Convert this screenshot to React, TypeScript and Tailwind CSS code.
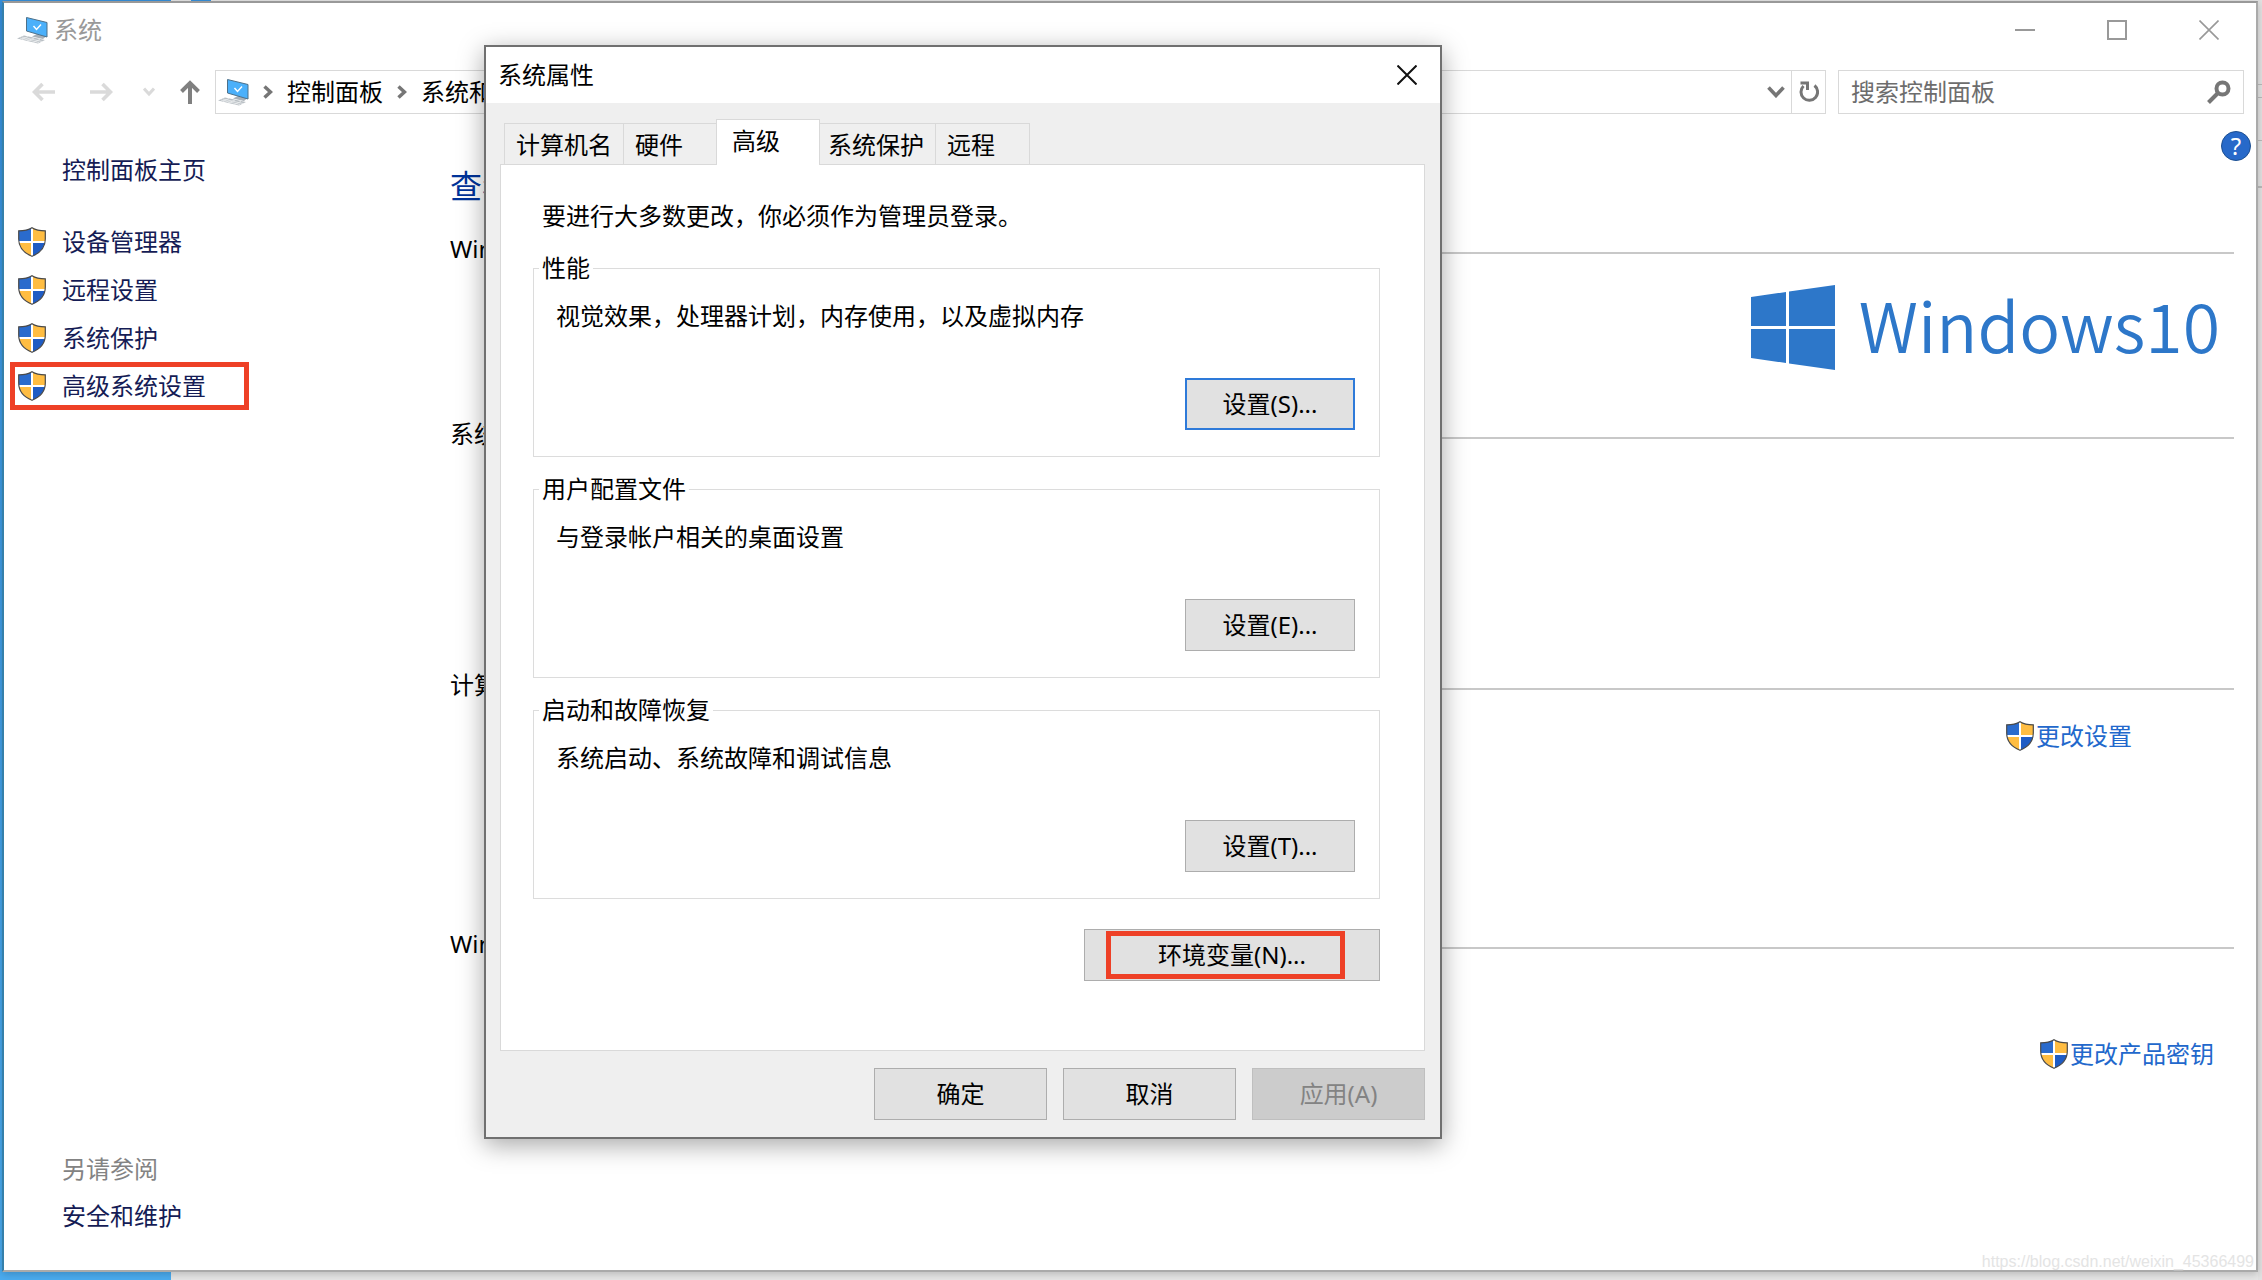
import React from "react";

const font = "font-['Noto_Sans',_'Noto_Sans_CJK_SC',sans-serif]";

function Shield() {
  return (
    <svg viewBox="0 0 28 30" className="h-[30px] w-7 shrink-0" aria-hidden="true">
      <defs>
        <clipPath id="shield-shape">
          <path d="M14 .5C11 2.600 5 3.800.7 3.800V12C.7 20 6 26 14 29.500 22 26 27.300 20 27.300 12V3.800C23 3.800 17 2.600 14 .5Z" />
        </clipPath>
      </defs>
      <g clipPath="url(#shield-shape)">
        <rect width="14" height="15" fill="#2a6bcd" />
        <rect x="14" width="14" height="15" fill="#ffbd42" />
        <rect y="15" width="14" height="15" fill="#ffbd42" />
        <rect x="14" y="15" width="14" height="15" fill="#1f5cc4" />
        <path d="M14 0V30M0 15H28" stroke="#fff" strokeWidth="2" />
      </g>
      <path d="M14 .7C11 2.600 5 3.800.7 3.800V12C.7 20 6 26 14 29.300 22 26 27.300 20 27.300 12V3.800C23 3.800 17 2.600 14 .7Z" fill="none" stroke="#4a4a4a" strokeWidth="1.200" />
    </svg>
  );
}

function ComputerIcon() {
  return (
    <svg viewBox="0 0 31 27" className="h-[27px] w-[31px] shrink-0" aria-hidden="true">
      <path d="M20 17 29 19.500 26 22 15 19.500Z" fill="#a9b1b8" />
      <path d="M9.500.5 30 5.500V20L9.500 14Z" fill="#4bb0fa" stroke="#4d7089" strokeWidth="1" />
      <path d="M16.500 9 19.500 12.500 24 7.500" fill="none" stroke="#fff" strokeWidth="1.400" />
      <path d="M7 18.500 28 23 21 26.500 0 21.500Z" fill="#b9bfc4" />
      <path d="M5 20 25 24.500M3 21 22 25.500M11 19.500 5 22.500M17 21 10 24M23 22.500 16 25.500" stroke="#eceff0" strokeWidth=".8" />
    </svg>
  );
}

function Chevron() {
  return (
    <svg viewBox="0 0 10 14" className="h-3.5 w-2.5 shrink-0" fill="none" stroke="#767676" strokeWidth="3.500" aria-hidden="true">
      <path d="M1.500 1.500 7.500 7 1.500 12.500" />
    </svg>
  );
}

const tasks = ["设备管理器", "远程设置", "系统保护", "高级系统设置"];

function Sidebar() {
  return (
    <nav className="flex w-[446px] shrink-0 flex-col pt-[38px] pb-9 text-[#151c55]" aria-label="任务">
      <a href="#home" className="ml-[58px] leading-9">控制面板主页</a>
      <ul className="mt-[30px] pl-1.5">
        {tasks.map((t, i) => (
          <li key={t}>
            <a
              href="#task"
              className={
                i === 3
                  ? "flex h-12 w-[239px] items-center gap-4 border-[5px] border-[#ee4026] pl-[3px]"
                  : "flex h-12 w-[239px] items-center gap-4 pl-2"
              }
            >
              <Shield />
              {t}
            </a>
          </li>
        ))}
      </ul>
      <p className="mt-auto ml-[58px] leading-9 text-[#838383]">另请参阅</p>
      <a href="#security" className="mt-[11px] ml-[58px] leading-9">安全和维护</a>
    </nav>
  );
}

function SectionTitle({ children }: { children: string }) {
  return (
    <div className="flex items-center gap-4 leading-9">
      <h2>{children}</h2>
      <span className="mt-2 h-0.5 flex-1 bg-[#c8c8c8]" />
    </div>
  );
}

function WindowsLogo() {
  return (
    <div className="flex items-start gap-6 text-[#2d77c9]">
      <svg viewBox="0 0 84 85" className="h-[85px] w-[84px]" fill="currentColor" aria-hidden="true">
        <path d="M0 12 35 7V41H0ZM38 6.500 84 0V41H38ZM0 44H35V78L0 73ZM38 44H84V85L38 78.500Z" />
      </svg>
      <span className="font-['Noto_Sans_CJK_SC',sans-serif] text-[68px] leading-[77px] font-[350]">Windows10</span>
    </div>
  );
}

function Main() {
  return (
    <main className="flex-1 pt-[49px] pr-[22px]">
      <h1 className="text-[32px] leading-[46px] text-[#003399]">查看有关计算机的基本信息</h1>
      <section className="mt-[22px] h-[185px]">
        <SectionTitle>Windows 版本</SectionTitle>
        <div className="mt-[18px] flex justify-end pr-3.5">
          <WindowsLogo />
        </div>
      </section>
      <section className="h-[251px]">
        <SectionTitle>系统</SectionTitle>
      </section>
      <section className="h-[259px]">
        <SectionTitle>计算机名、域和工作组设置</SectionTitle>
        <a href="#change" className="mt-[15px] mr-[102px] flex items-center justify-end gap-0.5 leading-9 text-[#2268cc]">
          <Shield />
          更改设置
        </a>
      </section>
      <section>
        <SectionTitle>Windows 激活</SectionTitle>
        <a href="#key" className="mt-[74px] mr-5 flex items-center justify-end gap-0.5 leading-9 text-[#2268cc]">
          <Shield />
          更改产品密钥
        </a>
      </section>
    </main>
  );
}

function TitleBar() {
  return (
    <header className="flex h-[54px] items-center pr-[37px] pl-[13px] text-[#999]">
      <ComputerIcon />
      <span className="ml-1.5 flex-1">系统</span>
      <div className="flex gap-[72px]">
        <button aria-label="最小化">
          <svg viewBox="0 0 20 20" className="size-5" stroke="currentColor" strokeWidth="2"><path d="M0 10H20" /></svg>
        </button>
        <button aria-label="最大化">
          <svg viewBox="0 0 20 20" className="size-5" stroke="currentColor" strokeWidth="2" fill="none"><path d="M1 1H19V19H1Z" /></svg>
        </button>
        <button aria-label="关闭">
          <svg viewBox="0 0 20 20" className="size-5" stroke="currentColor" strokeWidth="1.600"><path d="M.5.5 19.500 19.500M19.500.5.5 19.500" /></svg>
        </button>
      </div>
    </header>
  );
}

function NavBar() {
  return (
    <div className="mt-[13px] flex h-11 items-center pr-3 pl-7">
      <button aria-label="后退" className="text-[#dadada]">
        <svg viewBox="0 0 23 20" className="h-5 w-[23px]" fill="none" stroke="currentColor" strokeWidth="3.600"><path d="M23 10H3M10.500 2 2.500 10 10.500 18" /></svg>
      </button>
      <button aria-label="前进" className="ml-[35px] text-[#dadada]">
        <svg viewBox="0 0 23 20" className="h-5 w-[23px]" fill="none" stroke="currentColor" strokeWidth="3.600"><path d="M0 10H20M12.500 2 20.500 10 12.500 18" /></svg>
      </button>
      <button aria-label="最近位置" className="ml-[30px] text-[#dadada]">
        <svg viewBox="0 0 12 10" className="h-2.5 w-3" fill="none" stroke="currentColor" strokeWidth="3"><path d="M1 1.500 6 7 11 1.500" /></svg>
      </button>
      <button aria-label="向上" className="ml-[25px] text-[#808080]">
        <svg viewBox="0 0 20 24" className="h-6 w-5" fill="none" stroke="currentColor" strokeWidth="4"><path d="M10 24V4M1.500 11.500 10 3 18.500 11.500" /></svg>
      </button>
      <div className="ml-[15px] flex h-11 flex-1 items-center border border-[#d9d9d9] pl-0.5">
        <ComputerIcon />
        <span className="ml-3.5 flex items-center gap-3.5">
          <Chevron />
          <a href="#panel">控制面板</a>
          <Chevron />
          <a href="#security">系统和安全</a>
        </span>
        <button aria-label="历史" className="mr-1.5 ml-auto text-[#767676]">
          <svg viewBox="0 0 18 12" className="h-3 w-[18px]" fill="none" stroke="currentColor" strokeWidth="3.600"><path d="M1.500 1.500 9 9.500 16.500 1.500" /></svg>
        </button>
        <button aria-label="刷新" className="flex h-full w-[34px] items-center justify-center border-l border-[#d9d9d9] text-[#767676]">
          <svg viewBox="0 0 20 22" className="h-[22px] w-5" fill="none" stroke="currentColor" strokeWidth="3">
            <path d="M15.500 4.500A8.300 8.300 0 1 1 4.500 5M1.500 2H8.500V9" />
          </svg>
        </button>
      </div>
      <label className="ml-3 flex h-11 w-[406px] items-center border border-[#d9d9d9] pr-3 pl-3">
        <input aria-label="搜索控制面板" placeholder="搜索控制面板" className="min-w-0 flex-1 outline-none placeholder:text-[#6d6d6d]" />
        <svg viewBox="0 0 24 24" className="size-6" fill="none" stroke="#767676" strokeWidth="4" aria-hidden="true">
          <circle cx="15.500" cy="8.500" r="6" />
          <path d="M11 13 1.500 22.500" />
        </svg>
      </label>
    </div>
  );
}

const button = "h-[52px] border border-[#adadad] bg-[#e1e1e1]";

function Group({ title, text, label, focused }: { title: string; text: string; label: string; focused?: boolean }) {
  return (
    <fieldset className="mb-3.5 h-[207px] border border-[#dcdcdc] pr-6 pl-[22px]">
      <legend className="-ml-[17px] px-[3px] leading-9">{title}</legend>
      <p className="mt-3 leading-9">{text}</p>
      <div className="mt-11 flex justify-end">
        <button
          className={
            focused
              ? "h-[52px] w-[170px] border-2 border-[#2e7ad9] bg-[#e1e1e1]"
              : "h-[52px] w-[170px] border border-[#adadad] bg-[#e1e1e1]"
          }
        >
          {label}
        </button>
      </div>
    </fieldset>
  );
}

const tabs = [
  { name: "计算机名", cls: "h-[41px] w-[119px] border-t border-l pt-0.5 pl-[11px]" },
  { name: "硬件", cls: "h-[41px] w-[93px] border-t border-l pt-0.5 pl-[11px]" },
  { name: "高级", cls: "relative -mb-px h-[46px] w-[104px] border-x border-t bg-white pb-1 pl-[15px]" },
  { name: "系统保护", cls: "h-[41px] w-[115px] border-t pt-0.5 pl-2" },
  { name: "远程", cls: "h-[41px] w-[95px] border-x border-t pt-0.5 pl-[11px]" },
];

function Dialog() {
  return (
    <div
      role="dialog"
      aria-label="系统属性"
      className="absolute top-[45px] left-[484px] w-[958px] border-2 border-[#707070] bg-[#efefef] shadow-[0_6px_24px_rgba(0,0,0,0.35)]"
    >
      <div className="flex h-14 items-center justify-between bg-white pr-[23px] pl-3">
        <h2>系统属性</h2>
        <button aria-label="关闭">
          <svg viewBox="0 0 20 20" className="size-5" stroke="#111" strokeWidth="2"><path d="M.5.5 19.500 19.500M19.500.5.5 19.500" /></svg>
        </button>
      </div>
      <div className="pt-4 pr-[15px] pl-3.5">
        <div role="tablist" className="flex items-end pl-1">
          {tabs.map((t) => (
            <button key={t.name} role="tab" aria-selected={t.name === "高级"} className={"border-[#d9d9d9] text-left " + t.cls}>
              {t.name}
            </button>
          ))}
        </div>
        <div role="tabpanel" className="border border-[#d9d9d9] bg-white pt-[33px] pr-11 pb-[69px] pl-8">
          <p className="mb-4 pl-[9px] leading-9">要进行大多数更改，你必须作为管理员登录。</p>
          <Group title="性能" text="视觉效果，处理器计划，内存使用，以及虚拟内存" label="设置(S)..." focused />
          <Group title="用户配置文件" text="与登录帐户相关的桌面设置" label="设置(E)..." />
          <Group title="启动和故障恢复" text="系统启动、系统故障和调试信息" label="设置(T)..." />
          <div className="mt-[30px] flex justify-end">
            <button className={button + " relative w-[296px]"}>
              环境变量(N)...
              <span className="absolute top-px left-[21px] h-12 w-[239px] border-[5px] border-[#ee4026]" />
            </button>
          </div>
        </div>
        <div className="flex justify-end gap-4 pt-[17px] pb-[17px]">
          <button className={button + " w-[173px]"}>确定</button>
          <button className={button + " w-[173px]"}>取消</button>
          <button disabled className="h-[52px] w-[173px] border border-[#bfbfbf] bg-[#ccc] text-[#838383]">应用(A)</button>
        </div>
      </div>
    </div>
  );
}

export default function App() {
  return (
    <div className={font + " relative flex min-h-screen text-[24px] text-black"}>
      <div className="absolute inset-0 flex" aria-hidden="true">
        <div className="w-[171px] bg-linear-to-b from-[#3690dd] to-[#4bacf0]" />
        <div className="flex-1 bg-[#e6e6e6] pl-5">
          <div className="h-0.5 w-5 bg-[#3690dd]" />
        </div>
        <div className="flex w-1 flex-col bg-[#e2e2e2] pt-[84px]">
          <span className="h-px bg-[#bbb]" />
          <span className="mt-3 h-px bg-[#bbb]" />
          <span className="mt-[42px] h-px bg-[#bbb]" />
          <span className="mt-[45px] h-0.5 bg-[#bbb]" />
        </div>
      </div>
      <div className="relative mt-px mr-1 mb-2 ml-0.5 flex flex-1 flex-col border-2 border-t-[#999] border-r-[#aaa] border-b-[#aaa] border-l-[#3580ab] bg-white shadow-[0_2px_8px_rgba(0,0,0,0.2)]">
        <TitleBar />
        <NavBar />
        <div className="relative flex flex-1">
          <Sidebar />
          <Main />
          <button aria-label="帮助" className="absolute top-[17px] right-[5px] flex size-[30px] items-center justify-center rounded-full border border-[#1c4f91] bg-[#2769c9] text-[24px] leading-none text-white">
            ?
          </button>
          <span className="absolute right-0.5 bottom-0 font-['Liberation_Sans',sans-serif] text-[16px] leading-4 text-[#e4e4e4]">
            https://blog.csdn.net/weixin_45366499
          </span>
        </div>
      </div>
      <Dialog />
    </div>
  );
}
